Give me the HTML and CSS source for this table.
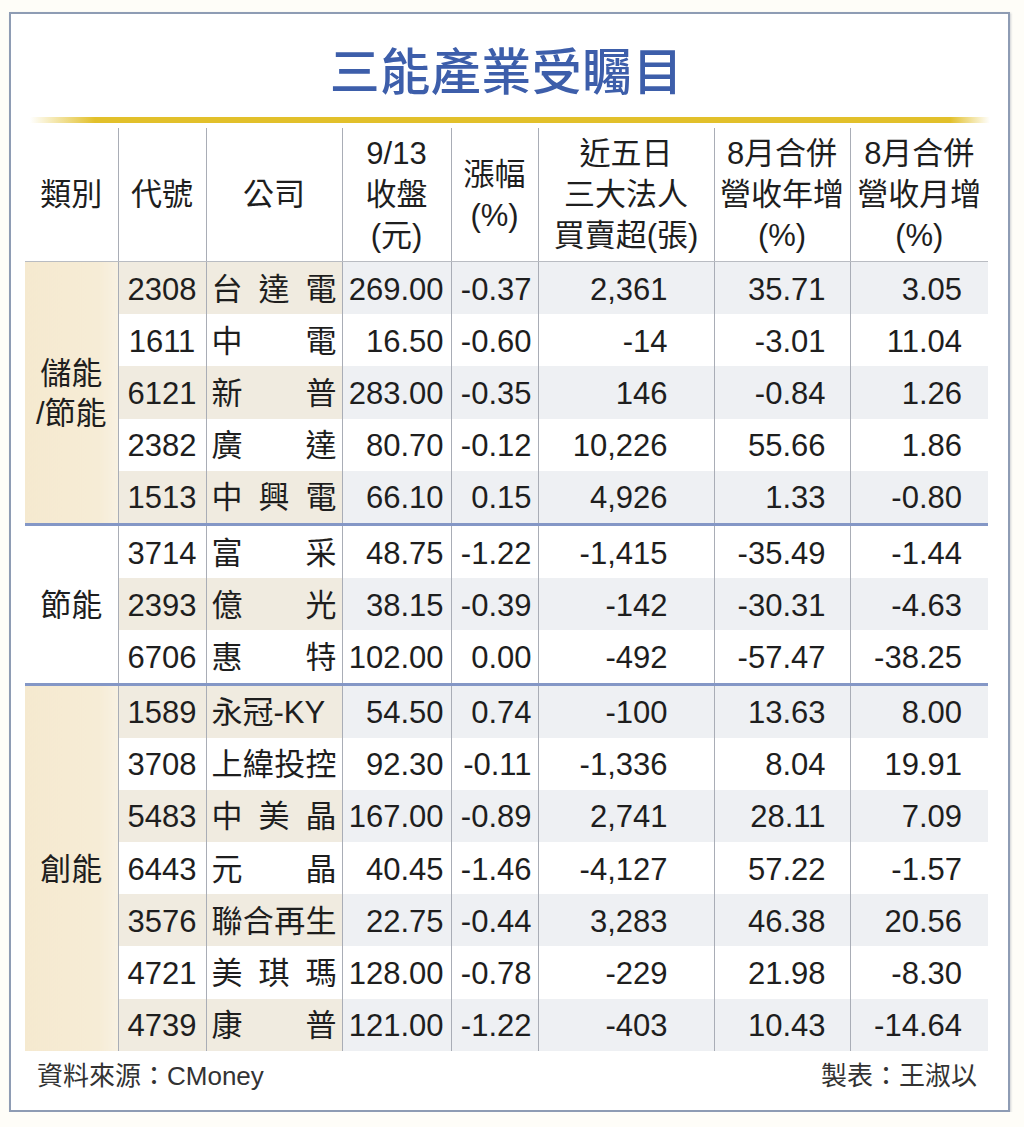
FILE: index.html
```html
<!DOCTYPE html>
<html lang="zh-Hant">
<head>
<meta charset="utf-8">
<title>三能產業受矚目</title>
<link rel="stylesheet" href="styles.css">
</head>
<body>
<div class="frame">
  <h1 class="title">三能產業受矚目</h1>
  <div class="goldline"></div>
  <table class="grid">
    <colgroup>
      <col class="c-cat"><col class="c-code"><col class="c-name"><col class="c-price"><col class="c-chg"><col class="c-inst"><col class="c-yoy"><col class="c-mom">
    </colgroup>
    <thead>
      <tr>
        <th>類別</th>
        <th>代號</th>
        <th>公司</th>
        <th>9/13<br>收盤<br>(元)</th>
        <th>漲幅<br>(%)</th>
        <th>近五日<br>三大法人<br>買賣超(張)</th>
        <th>8月合併<br>營收年增<br>(%)</th>
        <th>8月合併<br>營收月增<br>(%)</th>
      </tr>
    </thead>
    <tbody class="grp cream">
      <tr class="odd"><td class="cat" rowspan="5">儲能<br>/節能</td><td class="code">2308</td><td class="name"><div class="spread"><span>台</span><span>達</span><span>電</span></div></td><td class="num price">269.00</td><td class="num chg">-0.37</td><td class="num inst">2,361</td><td class="num yoy">35.71</td><td class="num mom">3.05</td></tr>
      <tr><td class="code">1611</td><td class="name"><div class="spread"><span>中</span><span>電</span></div></td><td class="num price">16.50</td><td class="num chg">-0.60</td><td class="num inst">-14</td><td class="num yoy">-3.01</td><td class="num mom">11.04</td></tr>
      <tr class="odd"><td class="code">6121</td><td class="name"><div class="spread"><span>新</span><span>普</span></div></td><td class="num price">283.00</td><td class="num chg">-0.35</td><td class="num inst">146</td><td class="num yoy">-0.84</td><td class="num mom">1.26</td></tr>
      <tr><td class="code">2382</td><td class="name"><div class="spread"><span>廣</span><span>達</span></div></td><td class="num price">80.70</td><td class="num chg">-0.12</td><td class="num inst">10,226</td><td class="num yoy">55.66</td><td class="num mom">1.86</td></tr>
      <tr class="odd"><td class="code">1513</td><td class="name"><div class="spread"><span>中</span><span>興</span><span>電</span></div></td><td class="num price">66.10</td><td class="num chg">0.15</td><td class="num inst">4,926</td><td class="num yoy">1.33</td><td class="num mom">-0.80</td></tr>
    </tbody>
    <tbody class="grp">
      <tr class="first"><td class="cat" rowspan="3">節能</td><td class="code">3714</td><td class="name"><div class="spread"><span>富</span><span>采</span></div></td><td class="num price">48.75</td><td class="num chg">-1.22</td><td class="num inst">-1,415</td><td class="num yoy">-35.49</td><td class="num mom">-1.44</td></tr>
      <tr class="odd"><td class="code">2393</td><td class="name"><div class="spread"><span>億</span><span>光</span></div></td><td class="num price">38.15</td><td class="num chg">-0.39</td><td class="num inst">-142</td><td class="num yoy">-30.31</td><td class="num mom">-4.63</td></tr>
      <tr><td class="code">6706</td><td class="name"><div class="spread"><span>惠</span><span>特</span></div></td><td class="num price">102.00</td><td class="num chg">0.00</td><td class="num inst">-492</td><td class="num yoy">-57.47</td><td class="num mom">-38.25</td></tr>
    </tbody>
    <tbody class="grp cream">
      <tr class="odd first"><td class="cat" rowspan="7">創能</td><td class="code">1589</td><td class="name"><div class="spread"><span>永冠-KY</span></div></td><td class="num price">54.50</td><td class="num chg">0.74</td><td class="num inst">-100</td><td class="num yoy">13.63</td><td class="num mom">8.00</td></tr>
      <tr><td class="code">3708</td><td class="name"><div class="spread"><span>上</span><span>緯</span><span>投</span><span>控</span></div></td><td class="num price">92.30</td><td class="num chg">-0.11</td><td class="num inst">-1,336</td><td class="num yoy">8.04</td><td class="num mom">19.91</td></tr>
      <tr class="odd"><td class="code">5483</td><td class="name"><div class="spread"><span>中</span><span>美</span><span>晶</span></div></td><td class="num price">167.00</td><td class="num chg">-0.89</td><td class="num inst">2,741</td><td class="num yoy">28.11</td><td class="num mom">7.09</td></tr>
      <tr><td class="code">6443</td><td class="name"><div class="spread"><span>元</span><span>晶</span></div></td><td class="num price">40.45</td><td class="num chg">-1.46</td><td class="num inst">-4,127</td><td class="num yoy">57.22</td><td class="num mom">-1.57</td></tr>
      <tr class="odd"><td class="code">3576</td><td class="name"><div class="spread"><span>聯</span><span>合</span><span>再</span><span>生</span></div></td><td class="num price">22.75</td><td class="num chg">-0.44</td><td class="num inst">3,283</td><td class="num yoy">46.38</td><td class="num mom">20.56</td></tr>
      <tr><td class="code">4721</td><td class="name"><div class="spread"><span>美</span><span>琪</span><span>瑪</span></div></td><td class="num price">128.00</td><td class="num chg">-0.78</td><td class="num inst">-229</td><td class="num yoy">21.98</td><td class="num mom">-8.30</td></tr>
      <tr class="odd"><td class="code">4739</td><td class="name"><div class="spread"><span>康</span><span>普</span></div></td><td class="num price">121.00</td><td class="num chg">-1.22</td><td class="num inst">-403</td><td class="num yoy">10.43</td><td class="num mom">-14.64</td></tr>
    </tbody>
  </table>
  <div class="footer"><span>資料來源：CMoney</span><span>製表：王淑以</span></div>
</div>
</body>
</html>
```

FILE: styles.css
```css
html, body {
  margin: 0;
  padding: 0;
  background: #fefdf8;
}
body {
  font-family: "Liberation Sans", "Noto Sans CJK TC", sans-serif;
  color: #1e1e1e;
}
.frame {
  box-sizing: border-box;
  margin: 12px 0 0 9px;
  width: 1001px;
  height: 1100px;
  border: 2px solid #8e9cb4;
  background: #ffffff;
  box-shadow: 1px 1px 2px rgba(120, 130, 150, 0.35);
  padding: 0 20px 0 14px;
}
.title {
  margin: 24px 0 0 0;
  height: 60px;
  line-height: 60px;
  font-family: "Noto Sans CJK TC", sans-serif;
  font-size: 50px;
  font-weight: 500;
  color: #3d5eaa;
  text-align: center;
  letter-spacing: 0.5px;
}
.goldline {
  margin: 19px 0 0 5px;
  width: 960px;
  height: 6px;
  background: linear-gradient(to right, rgba(232, 196, 40, 0) 0, #e2c02a 65px, #e2c02a 920px, rgba(232, 196, 40, 0) 960px);
}
.grid {
  margin-top: 5px;
  border-collapse: collapse;
  table-layout: fixed;
  width: 963px;
  font-size: 31px;
}
.c-cat { width: 93px; }
.c-code { width: 88px; }
.c-name { width: 136px; }
.c-price { width: 109px; }
.c-chg { width: 87px; }
.c-inst { width: 176px; }
.c-yoy { width: 136px; }
.c-mom { width: 138px; }

.grid th {
  height: 133px;
  padding: 0;
  font-weight: 400;
  font-size: 31px;
  line-height: 41px;
  text-align: center;
  vertical-align: middle;
  color: #1e1e1e;
  border-left: 1px solid #a9adb6;
  border-bottom: 1px solid #b9bcc2;
}
.grid th:first-child { border-left: none; }

.grid td {
  height: 49.2px;
  padding: 3px 0 0 0;
  line-height: 36px;
  vertical-align: middle;
  border-left: 1px solid #a9adb6;
  white-space: nowrap;
}
.grid tr.first td { border-top: 3px solid #8497c6; }

.cat {
  text-align: center;
  line-height: 40px !important;
  border-left: none !important;
  background: #ffffff;
}
.cream .cat {
  background: linear-gradient(to right, #f5e9cf 0, #f6ecd6 80%, #f8f1e2 100%);
}
.code { text-align: center; }
.name { padding: 3px 5px 0 5px !important; }
.spread {
  display: flex;
  justify-content: space-between;
}
.num { text-align: right; }
.price { padding-right: 7px !important; }
.chg { padding-right: 6px !important; }
.inst { padding-right: 46px !important; }
.yoy { padding-right: 24px !important; }
.mom { padding-right: 26px !important; }

tr.odd td.code,
tr.odd td.name { background: #f0ebe0; }
tr.odd td.num { background: #eef0f3; }

.footer {
  display: flex;
  justify-content: space-between;
  margin: 10px 11px 0 12px;
  font-size: 26px;
  line-height: 30px;
  color: #333333;
}
```
